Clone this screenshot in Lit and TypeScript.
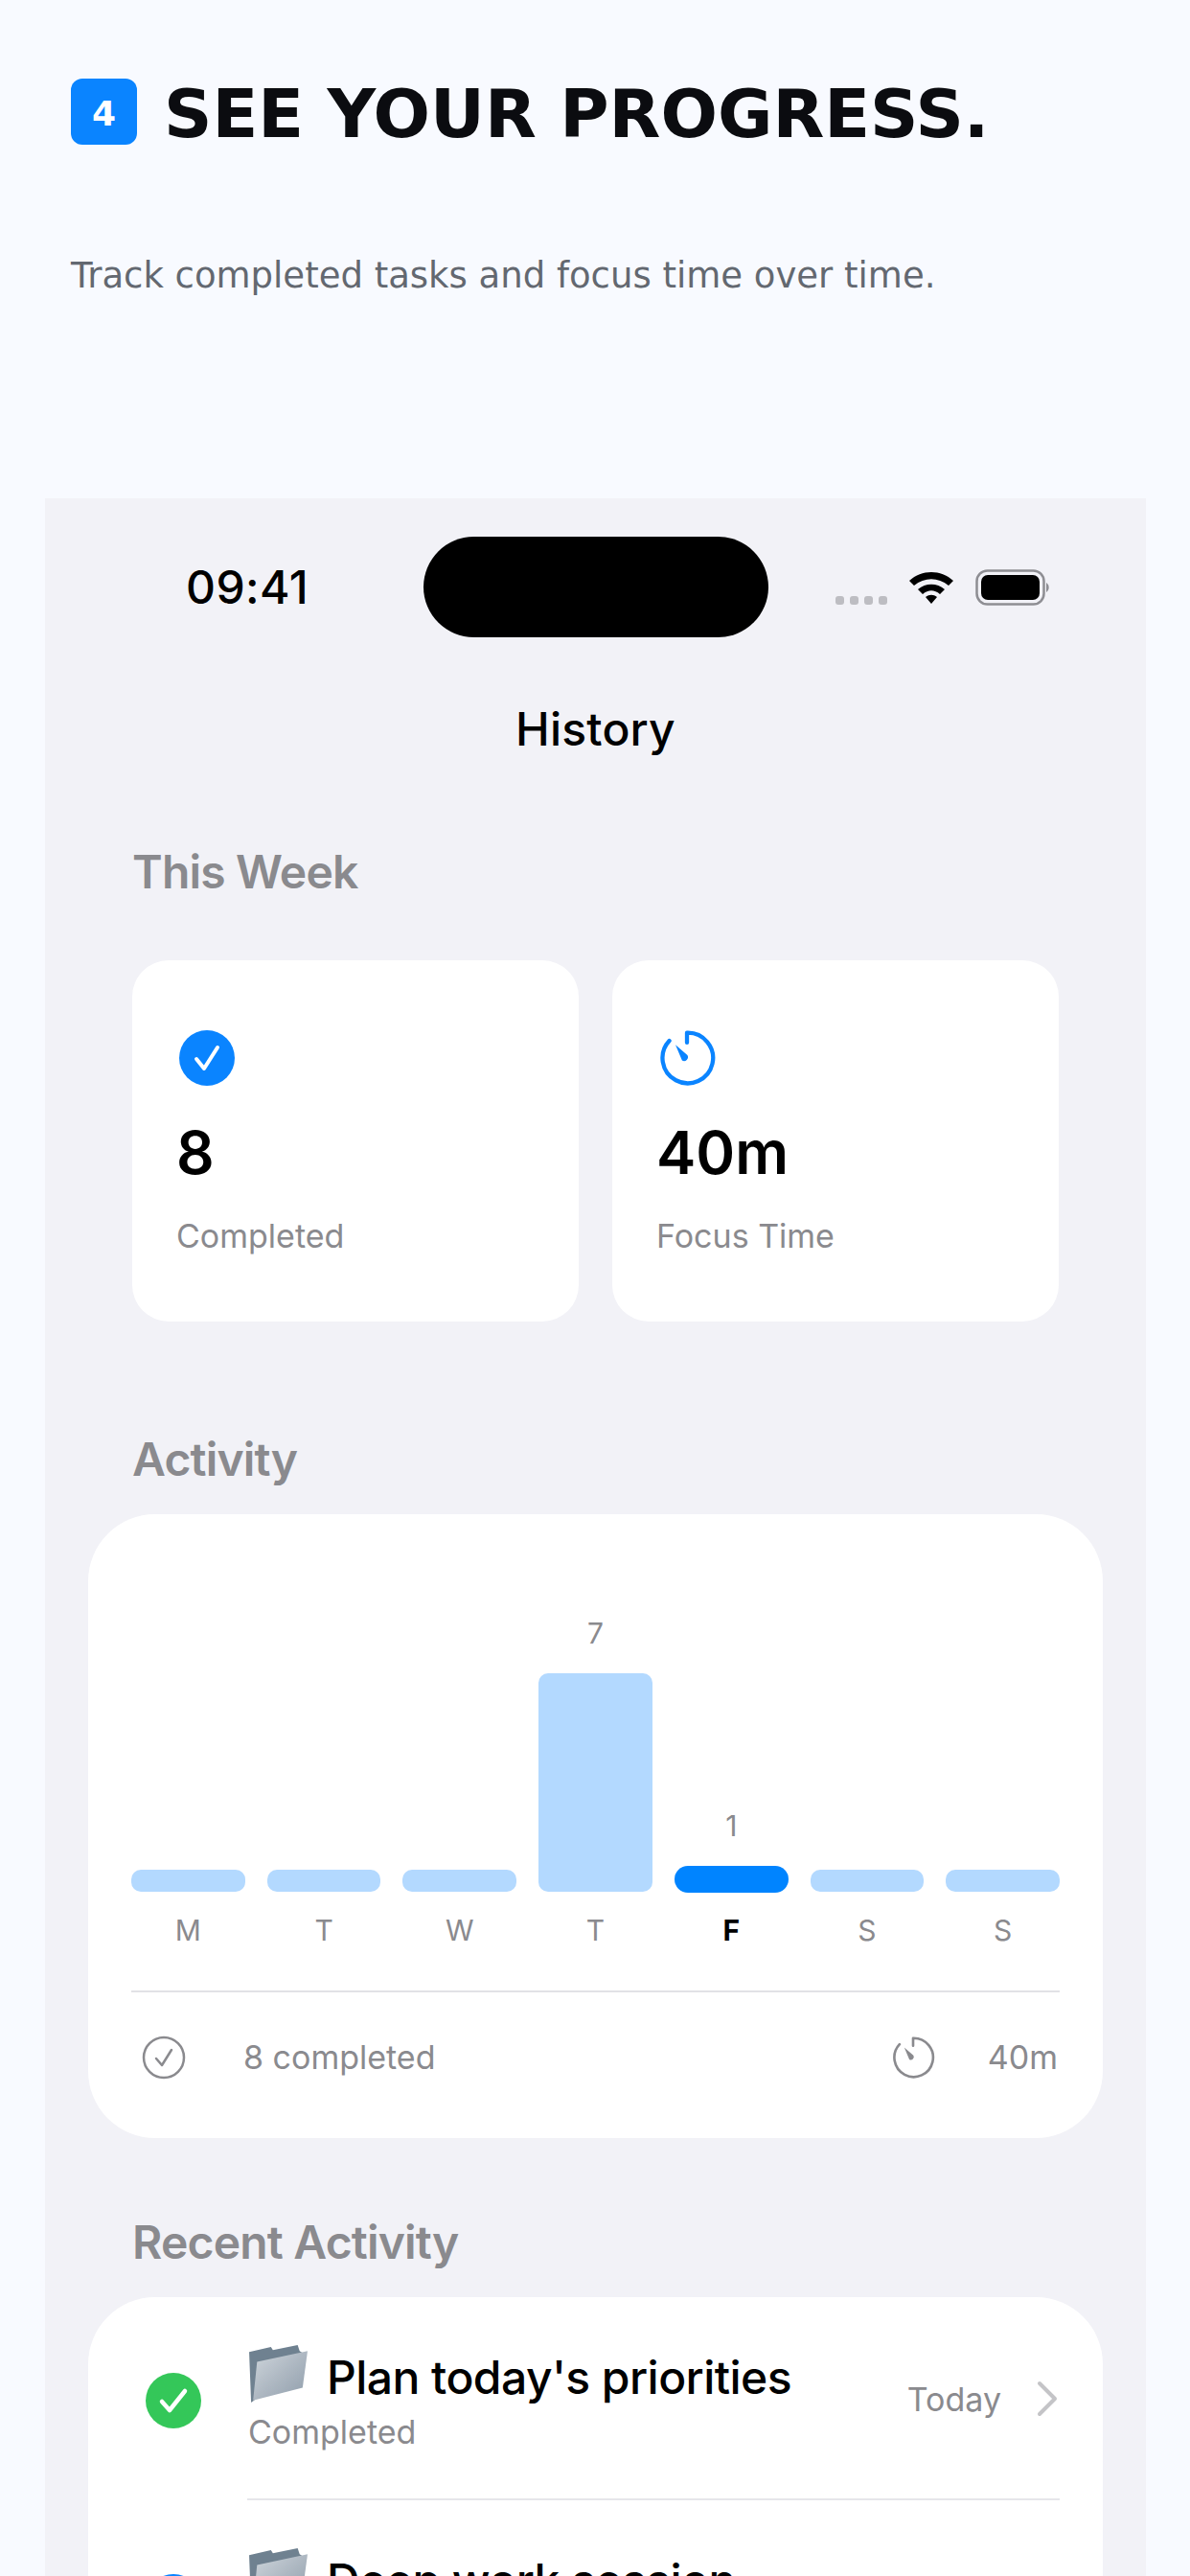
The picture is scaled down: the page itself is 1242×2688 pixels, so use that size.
import { LitElement, html, css, svg } from "lit";
import { customElement } from "lit/decorators.js";

const days = [
  { d: "M", v: "", h: 23 },
  { d: "T", v: "", h: 23 },
  { d: "W", v: "", h: 23 },
  { d: "T", v: "7", h: 228 },
  { d: "F", v: "1", h: 28, today: true },
  { d: "S", v: "", h: 23 },
  { d: "S", v: "", h: 23 },
];

const folder = (id: string) => html`<svg class="folder" viewBox="0 0 60 60">
  <defs><linearGradient id=${id} x1="0" y1="0" x2="1" y2="1"><stop offset="0" stop-color="#cfd6dc"/><stop offset="0.5" stop-color="#aeb8c2"/><stop offset="1" stop-color="#8f9dab"/></linearGradient></defs>
  <path d="M1 7 L23 2 L25 5 L50 0 L52 6 L55 8 L6 56 L3 58 Z" fill="#6f8190"/>
  <path d="M9 17 L60 6 L55 43 L5 56 Z" fill="url(#${id})"/>
</svg>`;

const timer = (stroke: string, w: number) => svg`<g fill="none" stroke=${stroke} stroke-width=${w} stroke-linecap="round" stroke-linejoin="round"><path d="M5.4 5.6 A12.3 12.3 0 1 0 14 1.7 V6.5"/></g><path d="M8.4 7.6 L14.2 12.6 A1.9 1.9 0 0 1 11.6 15.2 Z" fill=${stroke}/>`;

@customElement("app-root")
export class AppRoot extends LitElement {
  static styles = css`
    :host { display: block; width: 1242px; height: 2688px; overflow: hidden; background: #f8faff; font-family: Inter, "Liberation Sans", sans-serif; }
    .head { height: 520px; box-sizing: border-box; padding: 82px 74px 0; font-family: "DejaVu Sans", sans-serif; }
    .title-row { display: flex; align-items: center; gap: 28px; height: 69px; }
    .badge { width: 69px; height: 69px; border-radius: 12px; background: #0a84ff; color: #fff; font-size: 36px; font-weight: 700; display: flex; align-items: center; justify-content: center; padding-top: 4px; box-sizing: border-box; }
    h1 { margin: 0; font-size: 70px; line-height: 69px; font-weight: 700; color: #0b0c10; white-space: nowrap; position: relative; top: 3px; }
    .sub { margin: 115px 0 0; font-size: 37px; line-height: 44px; color: #636870; white-space: nowrap; }
    .phone { margin: 0 46px 0 47px; height: 2168px; background: #f2f2f7; position: relative; }
    .status { height: 145px; box-sizing: border-box; padding: 40px 98px 0 147px; display: flex; align-items: flex-start; position: relative; }
    .time { font-size: 48px; font-weight: 500; line-height: 105px; color: #000; width: 248px; letter-spacing: 0.4px; }
    .island { width: 360px; height: 105px; border-radius: 53px; background: #000; }
    .sys { flex: 1; display: flex; align-items: center; height: 105px; padding-left: 70px; gap: 21px; }
    .dots { display: flex; gap: 6px; padding-top: 28px; }
    .dots i { width: 9px; height: 9px; border-radius: 3px; background: #bdbdc2; }
    .wifi { margin-left: 1px; }
    .batt { margin-left: 1px; }
    .nav { height: 90px; text-align: center; font-size: 48px; font-weight: 500; line-height: 90px; color: #000; margin-top: 51px; letter-spacing: 0.2px; }
    .label { font-size: 48px; font-weight: 600; line-height: 58px; color: #8a8a8e; padding-left: 91px; letter-spacing: -0.8px; }
    .l1 { margin-top: 75px; }
    .stats { display: flex; gap: 35px; margin: 63px 91px 0; }
    .stat { flex: 1; height: 377px; background: #fff; border-radius: 38px; box-sizing: border-box; padding: 72px 46px 0; }
    .stat svg { display: block; width: 60px; height: 60px; margin-left: 2px; }
    .stat .n { font-size: 62px; font-weight: 600; line-height: 80px; color: #000; margin-top: 29px; }
    .stat .t { font-size: 34px; line-height: 42px; color: #8a8a8e; margin-top: 26px; }
    .l2 { margin-top: 115px; }
    .card { margin: 28px 45px 0; background: #fff; border-radius: 70px; }
    .activity { height: 651px; box-sizing: border-box; padding: 0 45px; display: flex; flex-direction: column; }
    .chart { flex: none; height: 394px; display: flex; gap: 23px; align-items: flex-end; }
    .col { flex: 1; display: flex; flex-direction: column; align-items: center; justify-content: flex-end; }
    .col .v { font-size: 30px; line-height: 36px; color: #8a8a8e; margin-bottom: 24px; }
    .col .b { width: 100%; border-radius: 10px; background: #b3d9ff; }
    .col .b.today { background: #0084ff; border-radius: 14px; margin-bottom: -1px; }
    .letters { display: flex; gap: 23px; margin-top: 21px; }
    .letters span { flex: 1; text-align: center; font-size: 30px; line-height: 38px; color: #8a8a8e; }
    .letters span.today { color: #000; font-weight: 700; }
    .rule { height: 2px; background: #e2e2e6; flex: none; }
    .activity .rule { margin-top: 44px; }
    .foot { display: flex; align-items: center; height: 135px; font-size: 34px; color: #8a8a8e; }
    .foot svg { width: 46px; height: 46px; flex: none; margin-left: 11px; }
    .foot .c { margin-left: 60px; flex: 1; }
    .foot .m { margin-left: 55px; margin-right: 2px; }
    .l3 { margin-top: 80px; }
    .recent { height: 500px; overflow: hidden; }
    .row { height: 210px; display: flex; align-items: center; position: relative; padding: 2px 46px 0 60px; box-sizing: border-box; }
    .row .ic { width: 58px; height: 58px; flex: none; margin-top: 4px; }
    .row .ic.next { margin-top: 0; }
    .row .body { margin-left: 49px; flex: 1; min-width: 0; padding-top: 6px; }
    .row .tl { display: flex; align-items: center; font-size: 48px; font-weight: 500; line-height: 60px; color: #000; gap: 20px; letter-spacing: -0.55px; margin-top: -4px; }
    .folder { width: 62px; height: 62px; flex: none; margin-top: -6px; }
    .row .st { font-size: 34px; line-height: 40px; color: #8a8a8e; margin-top: 7px; }
    .row .when { font-size: 34px; color: #8a8a8e; margin-right: 36px; }
    .row .chev { width: 24px; height: 38px; flex: none; }
    .sep { height: 2px; background: #e6e6ea; margin: 0 45px 0 166px; }
  `;

  render() {
    return html`
      <div class="head">
        <div class="title-row"><div class="badge">4</div><h1>SEE YOUR PROGRESS.</h1></div>
        <p class="sub">Track completed tasks and focus time over time.</p>
      </div>
      <div class="phone">
        <div class="status">
          <div class="time">09:41</div>
          <div class="island"></div>
          <div class="sys">
            <div class="dots"><i></i><i></i><i></i><i></i></div>
            <svg class="wifi" width="48" height="36" viewBox="0 0 48 36">
              <path d="M1 11 C14 -1 34 -1 47 11 L42 16 C31 7 17 7 6 16 Z M10 20 C18 13 30 13 38 20 L33 25 C27 20 21 20 15 25 Z M18 28 C22 25 26 25 30 28 L24 35 Z" fill="#000"/>
            </svg>
            <svg class="batt" width="79" height="38" viewBox="0 0 79 38">
              <rect x="1.5" y="1.5" width="70" height="35" rx="11" fill="none" stroke="#8e8e93" stroke-width="2.5"/>
              <rect x="6" y="6" width="61" height="26" rx="7" fill="#000"/>
              <path d="M74 14 a6 6 0 0 1 0 10 Z" fill="#8e8e93"/>
            </svg>
          </div>
        </div>
        <div class="nav">History</div>
        <div class="label l1">This Week</div>
        <div class="stats">
          <div class="stat">
            <svg viewBox="0 0 60 60"><circle cx="30" cy="30" r="29" fill="#0a84ff"/><path d="M19 31 L27 41 L41 19" fill="none" stroke="#fff" stroke-width="4" stroke-linecap="round" stroke-linejoin="round"/></svg>
            <div class="n">8</div><div class="t">Completed</div>
          </div>
          <div class="stat">
            <svg viewBox="0 0 28 28">${timer("#0a84ff", 2)}</svg>
            <div class="n">40m</div><div class="t">Focus Time</div>
          </div>
        </div>
        <div class="label l2">Activity</div>
        <div class="card activity">
          <div class="chart">
            ${days.map((x) => html`<div class="col">${x.v ? html`<div class="v">${x.v}</div>` : ""}<div class="b ${x.today ? "today" : ""}" style="height:${x.h}px"></div></div>`)}
          </div>
          <div class="letters">${days.map((x) => html`<span class=${x.today ? "today" : ""}>${x.d}</span>`)}</div>
          <div class="rule"></div>
          <div class="foot">
            <svg viewBox="0 0 46 46"><circle cx="23" cy="23" r="21" fill="none" stroke="#8a8a8e" stroke-width="2.5"/><path d="M15 24 L21 31 L31 15" fill="none" stroke="#8a8a8e" stroke-width="2.5" stroke-linecap="round" stroke-linejoin="round"/></svg>
            <span class="c">8 completed</span>
            <svg viewBox="0 0 28 28">${timer("#8a8a8e", 1.6)}</svg>
            <span class="m">40m</span>
          </div>
        </div>
        <div class="label l3">Recent Activity</div>
        <div class="card recent">
          <div class="row">
            <svg class="ic" viewBox="0 0 58 58"><circle cx="29" cy="29" r="29" fill="#34c759"/><path d="M17 30 L25 39 L41 19" fill="none" stroke="#fff" stroke-width="4.5" stroke-linecap="round" stroke-linejoin="round"/></svg>
            <div class="body">
              <div class="tl">${folder("f1")}<span>Plan today's priorities</span></div>
              <div class="st">Completed</div>
            </div>
            <span class="when">Today</span>
            <svg class="chev" viewBox="0 0 24 38"><path d="M4 3 L20 19 L4 35" fill="none" stroke="#c4c4c7" stroke-width="4" stroke-linecap="round" stroke-linejoin="round"/></svg>
          </div>
          <div class="sep"></div>
          <div class="row">
            <svg class="ic next" viewBox="0 0 58 58"><circle cx="29" cy="29" r="29" fill="#0a84ff"/></svg>
            <div class="body">
              <div class="tl">${folder("f2")}<span>Deep work session</span></div>
              <div class="st">Completed</div>
            </div>
          </div>
        </div>
      </div>
    `;
  }
}
